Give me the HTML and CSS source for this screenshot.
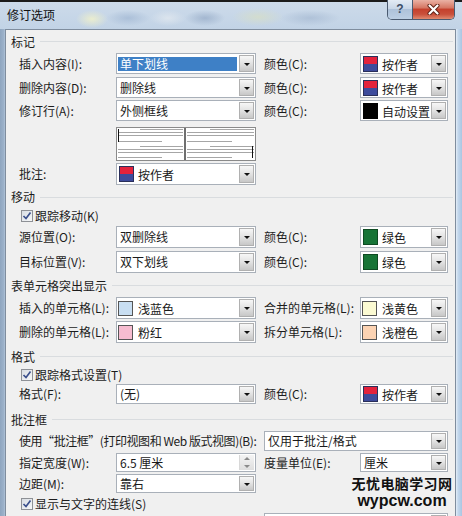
FILE: index.html
```html
<!DOCTYPE html>
<html lang="zh-CN">
<head>
<meta charset="utf-8">
<title>修订选项</title>
<link rel="stylesheet" href="styles.css">
</head>
<body>
<div class="window">
  <div class="titlebar">
    <span class="title">修订选项</span>
    <div class="caption">
      <div class="cap-help">?</div>
      <div class="cap-close"><svg width="13" height="11" viewBox="0 0 13 11"><path d="M2.5 1.5 L10.5 9.5 M10.5 1.5 L2.5 9.5" stroke="#5e2014" stroke-width="4" stroke-linecap="round"/><path d="M2.5 1.5 L10.5 9.5 M10.5 1.5 L2.5 9.5" stroke="#ffffff" stroke-width="2.2" stroke-linecap="round"/></svg></div>
    </div>
  </div>

  <div class="panel">
    <div class="sec h23">标记</div>
    <div class="row h21">
      <span class="lbl">插入内容(I):</span>
      <div class="combo w140 sel"><span class="val">单下划线</span><span class="arrow"></span></div>
      <span class="lbl2">颜色(C):</span>
      <div class="combo w88"><span class="sw author"></span><span class="val low">按作者</span><span class="arrow"></span></div>
    </div>
    <div class="row h21 g3">
      <span class="lbl">删除内容(D):</span>
      <div class="combo w140"><span class="val">删除线</span><span class="arrow"></span></div>
      <span class="lbl2">颜色(C):</span>
      <div class="combo w88"><span class="sw author"></span><span class="val low">按作者</span><span class="arrow"></span></div>
    </div>
    <div class="row h21 g2">
      <span class="lbl">修订行(A):</span>
      <div class="combo w140"><span class="val">外侧框线</span><span class="arrow"></span></div>
      <span class="lbl2">颜色(C):</span>
      <div class="combo w88"><span class="sw black"></span><span class="val low">自动设置</span><span class="arrow"></span></div>
    </div>
    <div class="prevrow h33 g6">
      <svg class="preview" width="140" height="34" viewBox="0 0 140 34">
        <rect x="0.5" y="0.5" width="139" height="33" fill="#ffffff" stroke="#8a8a8a"/>
        <rect x="68" y="1" width="2" height="32" fill="#707070"/>
        <g stroke="#a6a6a6" stroke-width="1" fill="none">
          <path d="M24 2.5H67 M2 5.5H67 M2 8.5H67 M2 14.5H46 M24 19.5H67 M2 22.5H67 M2 25.5H67 M2 30.5H46"/>
          <path d="M94 2.5H138 M71 5.5H138 M71 8.5H138 M71 14.5H116 M94 19.5H138 M71 22.5H138 M71 25.5H138 M71 30.5H116"/>
        </g>
        <rect x="2" y="2" width="1" height="13" fill="#111111"/>
        <rect x="136" y="19" width="1" height="12" fill="#111111"/>
      </svg>
    </div>
    <div class="row h22 g3">
      <span class="lbl">批注:</span>
      <div class="combo w140"><span class="sw author"></span><span class="val low">按作者</span><span class="arrow"></span></div>
    </div>

    <div class="sec h24">移动</div>
    <div class="chkrow h14">
      <span class="chk"><svg width="10" height="10" viewBox="0 0 10 10"><path d="M1.5 5 L4 7.5 L8.5 1.5" fill="none" stroke="#3a4f8c" stroke-width="1.7"/></svg></span>
      <span>跟踪移动(K)</span>
    </div>
    <div class="row h22 g3">
      <span class="lbl">源位置(O):</span>
      <div class="combo w140"><span class="val">双删除线</span><span class="arrow"></span></div>
      <span class="lbl2">颜色(C):</span>
      <div class="combo w88"><span class="sw green"></span><span class="val low">绿色</span><span class="arrow"></span></div>
    </div>
    <div class="row h22 g3">
      <span class="lbl">目标位置(V):</span>
      <div class="combo w140"><span class="val">双下划线</span><span class="arrow"></span></div>
      <span class="lbl2">颜色(C):</span>
      <div class="combo w88"><span class="sw green"></span><span class="val low">绿色</span><span class="arrow"></span></div>
    </div>

    <div class="sec h23 g1">表单元格突出显示</div>
    <div class="row h22">
      <span class="lbl">插入的单元格(L):</span>
      <div class="combo w140"><span class="sw sm lblue"></span><span class="val low">浅蓝色</span><span class="arrow"></span></div>
      <span class="lbl2">合并的单元格(L):</span>
      <div class="combo w88"><span class="sw sm lyellow"></span><span class="val low">浅黄色</span><span class="arrow"></span></div>
    </div>
    <div class="row h22 g2">
      <span class="lbl">删除的单元格(L):</span>
      <div class="combo w140"><span class="sw sm pink"></span><span class="val low">粉红</span><span class="arrow"></span></div>
      <span class="lbl2">拆分单元格(L):</span>
      <div class="combo w88"><span class="sw sm lorange"></span><span class="val low">浅橙色</span><span class="arrow"></span></div>
    </div>

    <div class="sec h21 g3">格式</div>
    <div class="chkrow h16">
      <span class="chk"><svg width="10" height="10" viewBox="0 0 10 10"><path d="M1.5 5 L4 7.5 L8.5 1.5" fill="none" stroke="#3a4f8c" stroke-width="1.7"/></svg></span>
      <span>跟踪格式设置(T)</span>
    </div>
    <div class="row h20 g1">
      <span class="lbl">格式(F):</span>
      <div class="combo w140"><span class="val">(无)</span><span class="arrow"></span></div>
      <span class="lbl2">颜色(C):</span>
      <div class="combo w88"><span class="sw author"></span><span class="val low">按作者</span><span class="arrow"></span></div>
    </div>

    <div class="sec h21 g5">批注框</div>
    <div class="row h20 g1">
      <span class="lbl-wide tight">使用“批注框”(打印视图和 Web 版式视图)(B):</span>
      <div class="combo w184"><span class="val">仅用于批注/格式</span><span class="arrow"></span></div>
    </div>
    <div class="row h19 g2">
      <span class="lbl">指定宽度(W):</span>
      <div class="combo w140"><span class="val">6.5 厘米</span><span class="spin"><i class="up"></i><i class="dn"></i></span></div>
      <span class="lbl2">度量单位(E):</span>
      <div class="combo w88"><span class="val">厘米</span><span class="arrow"></span></div>
    </div>
    <div class="row h19 g2">
      <span class="lbl">边距(M):</span>
      <div class="combo w140"><span class="val">靠右</span><span class="arrow"></span></div>
    </div>
    <div class="chkrow h17 g2">
      <span class="chk"><svg width="10" height="10" viewBox="0 0 10 10"><path d="M1.5 5 L4 7.5 L8.5 1.5" fill="none" stroke="#3a4f8c" stroke-width="1.7"/></svg></span>
      <span>显示与文字的连线(S)</span>
    </div>
    <div class="row h20 g1">
      <span class="lbl-wide"></span>
      <div class="combo w184"><span class="val"></span><span class="arrow"></span></div>
    </div>

    <div class="watermark">
      <div class="wm-cn">无忧电脑学习网</div>
      <div class="wm-en">wypcw.com</div>
    </div>
  </div>
</div>
</body>
</html>
```

FILE: styles.css
```css
* { box-sizing: border-box; }
html, body { margin: 0; padding: 0; }
body {
  width: 462px;
  height: 516px;
  overflow: hidden;
  font-family: "Noto Sans CJK SC", "Noto Sans", sans-serif;
  font-size: 12px;
  color: #1c1c1c;
  background: #c6d7e9;
}

.window {
  width: 462px;
  height: 516px;
  display: flex;
  flex-direction: column;
  overflow: hidden;
  background: linear-gradient(90deg, #8ea5bf 0, #9db2ca 4px, #b4c7dc 5px, #b4c7dc 455px, #e4eef8 456px, #c3d7ec 458px, #abc6e2 462px);
}

/* title bar */
.titlebar {
  height: 29px;
  flex: none;
  display: flex;
  align-items: flex-start;
  background:
    linear-gradient(#1b1b1b 0, #1b1b1b 2px, transparent 2px),
    radial-gradient(ellipse 16px 9px at 92px 19px, rgba(236, 238, 205, 0.95), transparent),
    radial-gradient(ellipse 22px 8px at 128px 18px, rgba(160, 182, 210, 0.7), transparent),
    radial-gradient(ellipse 18px 8px at 168px 18px, rgba(222, 230, 238, 0.9), transparent),
    radial-gradient(ellipse 20px 8px at 205px 18px, rgba(140, 162, 192, 0.6), transparent),
    radial-gradient(ellipse 26px 9px at 258px 17px, rgba(214, 222, 200, 0.8), transparent),
    radial-gradient(ellipse 30px 8px at 310px 18px, rgba(160, 180, 206, 0.6), transparent),
    linear-gradient(#cddbea, #c2d3e6);
}
.title {
  margin: 7px 0 0 7px;
  line-height: 16px;
  font-size: 12px;
  color: #111;
}
.caption {
  margin-left: auto;
  margin-right: 7px;
  height: 20px;
  display: flex;
  border: 1px solid #4a5a70;
  border-top: none;
  border-radius: 0 0 5px 5px;
  overflow: hidden;
}
.cap-help {
  width: 25px;
  border-right: 1px solid #4a5a70;
  background: linear-gradient(#e3ebf4 0, #c9d7e7 45%, #aec2da 50%, #bccfe4 100%);
  color: #3b4d66;
  font-family: "Liberation Sans", sans-serif;
  font-weight: bold;
  font-size: 12px;
  line-height: 19px;
  text-align: center;
}
.cap-close {
  width: 41px;
  display: flex;
  align-items: center;
  justify-content: center;
  background: linear-gradient(#eab1a4 0, #d67865 40%, #c5412d 50%, #c9503b 75%, #e08a70 100%);
}

/* dialog panel */
.panel {
  position: relative;
  flex: 1;
  margin: 0 6px 0 5px;
  border: 1px solid #7f8d9e;
  border-bottom: none;
  background: #f0f0f0;
  padding-right: 2px;
  display: flex;
  flex-direction: column;
}

.sec {
  display: flex;
  align-items: center;
  padding-left: 5px;
  line-height: 16px;
  flex: none;
}
.sec::after {
  content: "";
  flex: 1;
  height: 1px;
  background: #d9dcdf;
  margin-left: 5px;
}

.row {
  display: flex;
  align-items: center;
  padding-left: 13px;
  flex: none;
}
.prevrow {
  display: flex;
  padding-left: 110px;
  flex: none;
}
.preview { display: block; }
.chkrow {
  display: flex;
  align-items: center;
  padding-left: 15px;
  line-height: 16px;
  flex: none;
}
.chk {
  width: 12px;
  height: 12px;
  margin-right: 2px;
  border: 1px solid #8e9196;
  background: linear-gradient(135deg, #d8dde3, #f7f8f9);
  display: flex;
  align-items: center;
  justify-content: center;
}

.lbl { width: 97px; flex: none; white-space: nowrap; line-height: 16px; }
.lbl2 { width: 96px; margin-left: 8px; flex: none; white-space: nowrap; line-height: 16px; }
.lbl-wide { width: 245px; flex: none; white-space: nowrap; line-height: 16px; }
.tight { letter-spacing: -0.45px; }

.combo {
  height: 100%;
  display: flex;
  align-items: center;
  flex: none;
  background: #ffffff;
  border: 1px solid #a9b0b9;
  padding: 1px;
}
.w140 { width: 140px; }
.w88 { width: 88px; }
.w184 { width: 184px; }

.val {
  flex: 1;
  min-width: 0;
  padding-left: 2px;
  white-space: nowrap;
  line-height: 16px;
  color: #1a1a1a;
}
.val.low { padding-left: 0; padding-top: 2px; }
.sel .val {
  height: 14px;
  line-height: 14px;
  margin-right: 2px;
  background: #3e80c6;
  color: #ffffff;
}

.arrow {
  width: 15px;
  align-self: stretch;
  flex: none;
  border: 1px solid #b0b0b0;
  background: linear-gradient(#f7f7f7, #e2e2e2 50%, #c7c7c7);
  display: flex;
  align-items: center;
  justify-content: center;
}
.arrow::after {
  content: "";
  border-left: 3px solid transparent;
  border-right: 3px solid transparent;
  border-top: 3px solid #111;
  margin-top: 1px;
}

.spin {
  width: 15px;
  align-self: stretch;
  flex: none;
  display: flex;
  flex-direction: column;
  background: linear-gradient(#f4f4f4, #dedede);
  border-left: 1px solid #d8d8d8;
}
.spin i {
  flex: 1;
  display: flex;
  align-items: center;
  justify-content: center;
}
.spin .up::after {
  content: "";
  border-left: 3px solid transparent;
  border-right: 3px solid transparent;
  border-bottom: 3px solid #8a8a8a;
}
.spin .dn::after {
  content: "";
  border-left: 3px solid transparent;
  border-right: 3px solid transparent;
  border-top: 3px solid #8a8a8a;
}

.sw {
  width: 15px;
  height: 16px;
  flex: none;
  margin-left: 1px;
  margin-right: 4px;
  border: 1px solid #3a3a3a;
}
.sw.sm { height: 15px; margin-left: 0; margin-right: 5px; border-color: #555; }
.author { background: linear-gradient(#e3223c 0, #e3223c 48%, #3d4b9c 52%, #3d4b9c 100%); border-color: #2a2f5a; }
.black { background: #000; border-color: #000; }
.green { background: #177436; border-color: #0e4a22; }
.lblue { background: #c8def2; }
.lyellow { background: #fbfad2; }
.pink { background: #f6bcd0; }
.lorange { background: #fcd3b3; }

/* vertical rhythm */
.g1 { margin-top: 1px; }
.g2 { margin-top: 2px; }
.g3 { margin-top: 3px; }
.g5 { margin-top: 5px; }
.g6 { margin-top: 6px; }
.h14 { height: 14px; }
.h16 { height: 16px; }
.h17 { height: 17px; }
.h19 { height: 19px; }
.h20 { height: 20px; }
.h21 { height: 21px; }
.h22 { height: 22px; }
.h23 { height: 23px; }
.h24 { height: 24px; }
.h33 { height: 33px; }

/* watermark overlay */
.watermark {
  position: absolute;
  left: 345px;
  top: 445px;
  width: 102px;
  text-align: center;
  color: #111;
  font-weight: bold;
}
.wm-cn {
  font-size: 14px;
  line-height: 17px;
  letter-spacing: 0.4px;
}
.wm-en {
  font-family: "Liberation Sans", sans-serif;
  font-size: 16px;
  line-height: 14px;
  margin-top: 2px;
}
```
